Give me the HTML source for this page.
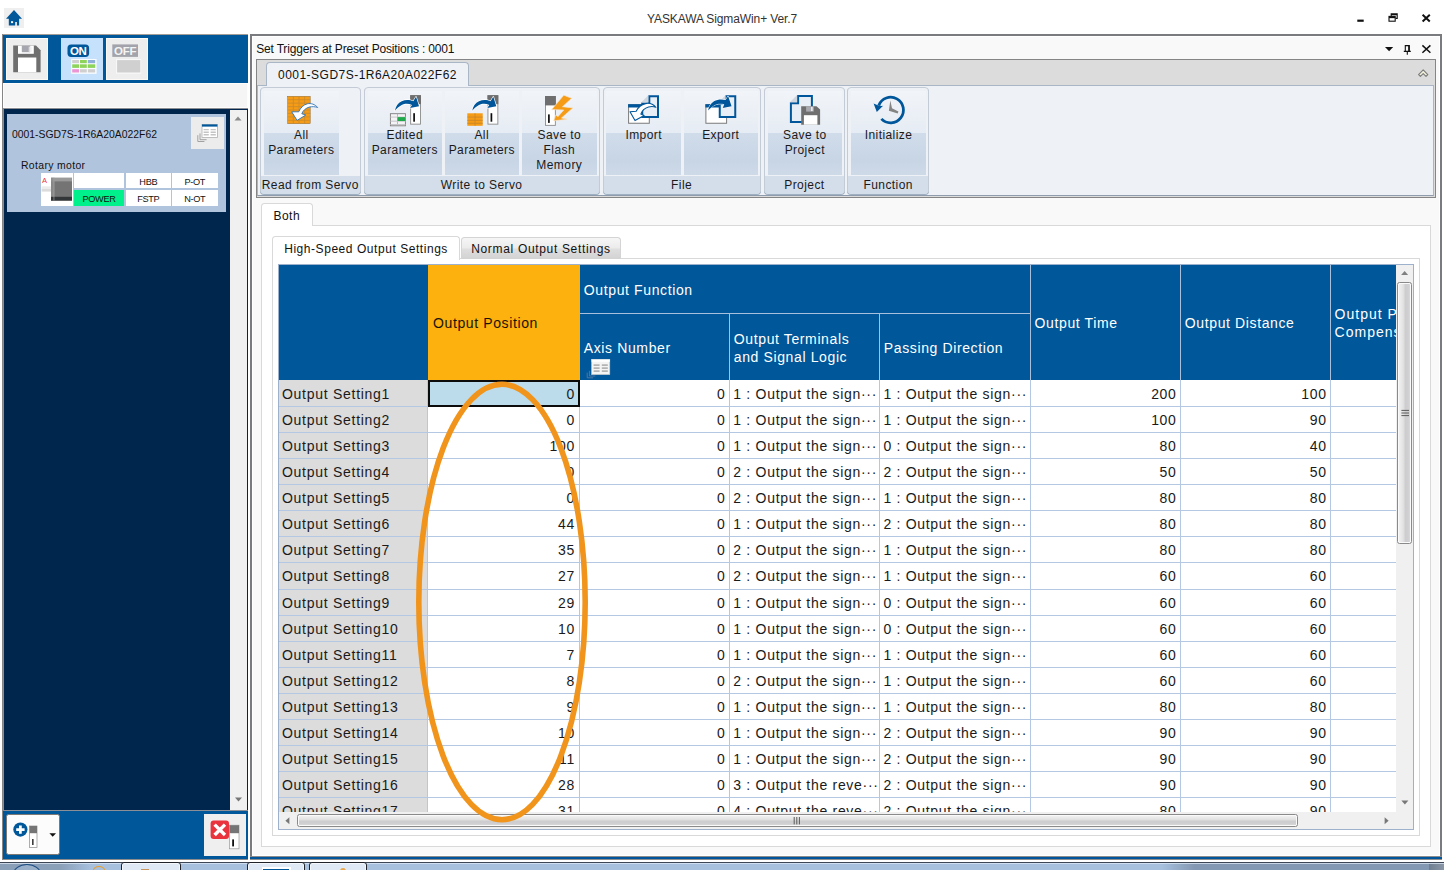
<!DOCTYPE html>
<html lang="en"><head><meta charset="utf-8"><title>YASKAWA SigmaWin+ Ver.7</title>
<style>
*{box-sizing:border-box;margin:0;padding:0}
html,body{width:1444px;height:870px;overflow:hidden;background:#fff}
body{position:relative;font-family:"Liberation Sans",sans-serif;color:#111;font-size:12px}
.a{position:absolute}
.t{position:absolute;white-space:nowrap;line-height:1}
svg{position:absolute;overflow:visible}
/* ribbon */
.grp{position:absolute;top:87px;height:107px;border:1px solid #c3ccd6;border-radius:4px;background:#eef2f6;box-shadow:0 1px 0 #9fb0c3}
.grp .lab{position:absolute;left:0;right:0;top:88px;height:18px;background:#d3deea;border-radius:0 0 3px 3px}
.btn{position:absolute;top:90.5px;height:84px;background:linear-gradient(#f1f4f8 0,#e6ecf4 42.5px,#d0dcea 42.5px,#c8d5e5 70px,#cfdae8 84px)}
.rt{position:absolute;white-space:nowrap;text-align:center;font-size:12px;letter-spacing:.42px;line-height:15px;color:#1a1a1a}
.gl{position:absolute;white-space:nowrap;text-align:center;font-size:12px;letter-spacing:.42px;line-height:15px;color:#1a1a1a;top:177.5px}
/* table */
.hc{position:absolute;background:#005799;color:#fff;font-size:14px;letter-spacing:.55px;line-height:18px}
.row{position:absolute;left:279px;width:1117px;height:27px}
.c{position:absolute;top:0;height:100%;border-right:1px solid #b4c7e3;border-bottom:1px solid #b4c7e3;font-size:14px;letter-spacing:.7px;line-height:26px;white-space:nowrap;overflow:hidden;color:#1a1a1a}
.row.f .c{padding-top:1.4px}
.c.n{text-align:right;padding-right:3.4px}
.c.l{padding-left:3.5px}
.c.h{background:#dcdcdc;padding-left:3px;letter-spacing:.72px}
</style></head><body>
<div class="a" style="left:4px;top:8px;width:20px;height:20px;background:#efefef"></div>
<svg style="left:4px;top:8px" width="20" height="20" viewBox="4 8 20 20"><path d="M14 10 L22 18.8 H19.1 V25.6 H16.9 V21.9 H15.2 V25.6 H8.8 V18.8 H6 Z" fill="#005799"/><rect x="11" y="21.2" width="2.1" height="1.9" fill="#fff"/></svg>
<div class="t" style="left:647px;top:12.5px;font-size:12px;letter-spacing:-.11px;color:#333">YASKAWA SigmaWin+ Ver.7</div>
<svg style="left:1350px;top:8px" width="90" height="20" viewBox="1350 8 90 20"><rect x="1357.3" y="19.6" width="6.4" height="2.2" fill="#111"/><path d="M1391.2 16v-2.2h6v4.600h-1.600M1391.2 14.6h6" fill="none" stroke="#111" stroke-width="1.1"/><rect x="1389" y="16.4" width="6.200" height="4.800" fill="#fff" stroke="#111" stroke-width="1.1"/><path d="M1389 17.500h6.200" stroke="#111" stroke-width="1.300"/><path d="M1422.6 14.8l7.2 6.6M1429.8 14.8l-7.2 6.6" stroke="#111" stroke-width="2" fill="none"/></svg>
<div class="a" style="left:1.9px;top:34px;width:1.2px;height:826px;background:#868686"></div>
<div class="a" style="left:3px;top:34px;width:245px;height:1px;background:#a39d97"></div>
<div class="a" style="left:3.1px;top:34.8px;width:244.9px;height:48.3px;background:#005799"></div>
<div class="a" style="left:3.1px;top:83.1px;width:244.9px;height:24.9px;background:#fffdfb"></div>
<div class="a" style="left:4.1px;top:84.1px;width:242.9px;height:22.7px;background:#f5f5f5"></div>
<div class="a" style="left:3.1px;top:108px;width:244.9px;height:703px;background:#8c8f96"></div>
<div class="a" style="left:4px;top:108.8px;width:244px;height:701px;background:#00264d"></div>
<div class="a" style="left:230px;top:109.5px;width:17px;height:700px;background:#f0f0f0"></div>
<div class="a" style="left:3.1px;top:810.9px;width:244.9px;height:48.500px;background:#005799"></div>
<div class="a" style="left:3.1px;top:859.4px;width:244.9px;height:.7px;background:#8c8c8c"></div>
<svg style="left:230px;top:109px" width="17" height="700" viewBox="230 109 17 700"><path d="M234.5 120.5l3.5-4 3.5 4z" fill="#8a8a8a"/><path d="M235 797.5h7l-3.5 4z" fill="#777"/></svg>
<div class="a" style="left:6px;top:38px;width:42px;height:42px;background:#eeeeee;border:1px solid #fcf9f5"></div>
<div class="a" style="left:61px;top:38px;width:42px;height:42px;background:#c5e1fb"></div>
<div class="a" style="left:106px;top:38px;width:42px;height:42px;background:#eeeeee;border:1px solid #fcf9f5"></div>
<svg style="left:6px;top:38px" width="42" height="42" viewBox="6 38 42 42"><path d="M13.2 45.6H36l4.6 4.6v22.1H13.2z" fill="#6f6f6f"/><rect x="18" y="57.5" width="18.3" height="14.8" fill="#fff"/><rect x="18" y="45.6" width="15.8" height="8.2" fill="#fff"/><rect x="21.8" y="45.6" width="8.4" height="6.6" fill="#a6a6ae"/><rect x="30.2" y="46.6" width="2" height="5.4" fill="#f4f4f4"/><rect x="28.7" y="46.6" width="1.5" height="5.6" fill="#dcdce0"/></svg>
<svg style="left:61px;top:38px" width="42" height="42" viewBox="61 38 42 42"><rect x="67.5" y="44.4" width="21.6" height="12.5" rx="3.6" fill="#005799"/><text x="78.3" y="54.6" text-anchor="middle" font-family="Liberation Sans, sans-serif" font-weight="700" font-size="11.5" fill="#fff" letter-spacing="-.3">ON</text><rect x="71.2" y="59" width="25.4" height="14.800" fill="#fafdff"/><rect x="72.2" y="60" width="6.8" height="3.2" fill="#cfcfcf"/><rect x="80" y="60" width="6.8" height="3.2" fill="#8ed45a"/><rect x="87.8" y="60" width="7.4" height="3.2" fill="#8fb0d8"/><rect x="72.2" y="64.3" width="6.8" height="3.6" fill="#8ed45a"/><rect x="80" y="64.3" width="6.8" height="3.6" fill="#8ed45a"/><rect x="87.8" y="64.3" width="7.4" height="3.6" fill="#8ed45a"/><rect x="72.2" y="69.200" width="6.8" height="3.300" fill="#ec94d4"/><rect x="80" y="69.200" width="6.8" height="3.300" fill="#cfcfcf"/><rect x="87.8" y="69.200" width="7.4" height="3.300" fill="#cfcfcf"/></svg>
<svg style="left:106px;top:38px" width="42" height="42" viewBox="106 38 42 42"><rect x="112.3" y="44.4" width="25.7" height="12.5" fill="#a3a3ab"/><text x="125.1" y="54.8" text-anchor="middle" font-family="Liberation Sans, sans-serif" font-weight="700" font-size="11.5" fill="#f4f4f4" letter-spacing="-.2">OFF</text><rect x="116" y="59" width="25.2" height="14.8" fill="#f8f8f8"/><rect x="117.100" y="60.100" width="23.200" height="12.400" fill="#d0d0d0"/></svg>
<div class="a" style="left:7px;top:114px;width:219px;height:98px;background:#b0c4de"></div>
<div class="t" style="left:12px;top:130.3px;font-size:10.4px;letter-spacing:.0px;color:#111">0001-SGD7S-1R6A20A022F62</div>
<div class="t" style="left:21px;top:161px;font-size:10.4px;letter-spacing:.36px;color:#111">Rotary motor</div>
<div class="a" style="left:191px;top:117px;width:33px;height:32px;background:#ececec"></div>
<svg style="left:191px;top:117px" width="33" height="32" viewBox="191 117 33 32"><path d="M197.8 135.2v6.3h6.6M200 133.4v6.3h6.6" fill="none" stroke="#9a9a9a" stroke-width="0.9"/><rect x="202" y="124.5" width="15.4" height="13" fill="#fff" stroke="#b0b0b0" stroke-width=".8"/><rect x="202" y="124.4" width="15.4" height="2.2" fill="#005799"/><path d="M203.6 129.6h5.2M203.6 132.2h5.2M203.6 134.8h5.2M210.6 129.6h5.2M210.6 132.2h5.2M210.6 134.8h5.2" stroke="#c4c4c4" stroke-width="1.4"/></svg>
<div class="a" style="left:41px;top:173px;width:32px;height:33px;background:#fff"></div>
<div class="a" style="left:74px;top:173px;width:50px;height:14.6px;background:#fff"></div>
<div class="a" style="left:74px;top:189.6px;width:50px;height:16.2px;background:#00f08c"></div>
<div class="a" style="left:126px;top:173px;width:44.6px;height:14.6px;background:#fff"></div>
<div class="a" style="left:126px;top:189.6px;width:44.6px;height:16.2px;background:#fff"></div>
<div class="a" style="left:172px;top:173px;width:45.6px;height:14.6px;background:#fff"></div>
<div class="a" style="left:172px;top:189.6px;width:45.6px;height:16.2px;background:#fff"></div>
<div class="t" style="left:74px;width:50px;top:195px;text-align:center;font-size:9.2px;letter-spacing:-.3px;color:#111">POWER</div>
<div class="t" style="left:126px;width:44.6px;top:177.6px;text-align:center;font-size:9.2px;letter-spacing:-.3px;color:#111">HBB</div>
<div class="t" style="left:126px;width:44.6px;top:195px;text-align:center;font-size:9.2px;letter-spacing:-.3px;color:#111">FSTP</div>
<div class="t" style="left:172px;width:45.6px;top:177.6px;text-align:center;font-size:9.2px;letter-spacing:-.3px;color:#111">P-OT</div>
<div class="t" style="left:172px;width:45.6px;top:195px;text-align:center;font-size:9.2px;letter-spacing:-.3px;color:#111">N-OT</div>
<div class="t" style="left:42px;top:176.800px;font-size:7.5px;color:#f0323c">A</div>
<svg style="left:41px;top:173px" width="32" height="33" viewBox="41 173 32 33"><rect x="41.6" y="186.400" width="9.6" height="2.6" fill="#ececec"/><rect x="41.6" y="189" width="9.6" height="2.6" fill="#dcdcdc"/><rect x="51" y="177.8" width="21" height="22.8" fill="#747474"/><rect x="51" y="177.8" width="21" height="3.6" fill="#9a9a9a"/><rect x="51" y="177.8" width="3.4" height="22.8" fill="#8c8c8c" opacity=".8"/><rect x="51" y="196.8" width="21" height="3.800" fill="#333639"/><rect x="53.600" y="177.800" width=".7" height="22.800" fill="#b0b0b0" opacity=".8"/></svg>
<div class="a" style="left:6.3px;top:814.3px;width:54.2px;height:41px;background:#fcfcfc;border:.8px solid #7c7874;border-radius:2.5px"></div>
<div class="a" style="left:204px;top:814px;width:42px;height:42px;background:#efefef"></div>
<svg style="left:7px;top:815px" width="54" height="40" viewBox="7 815 54 40"><circle cx="20.4" cy="829.6" r="7.1" fill="#005799"/><path d="M20.4 825.4v8.4M16.2 829.6h8.4" stroke="#fff" stroke-width="2.7"/><rect x="29.6" y="826" width="7.4" height="21.4" fill="#fff" stroke="#8a8a8a" stroke-width=".7"/><rect x="29.6" y="826" width="7.4" height="7.2" fill="#757575"/><rect x="32.2" y="839" width="1.3" height="6" fill="#111"/><path d="M49.4 833.2h6.6l-3.3 3.6z" fill="#111"/></svg>
<svg style="left:204px;top:814px" width="42" height="42" viewBox="204 814 42 42"><rect x="229.6" y="825.2" width="9.4" height="23.6" fill="#fff" stroke="#9a9a9a" stroke-width=".7"/><rect x="229.6" y="825.2" width="9.4" height="8" fill="#757575"/><rect x="232.2" y="839.4" width="1.8" height="7" fill="#111"/><rect x="210.6" y="820.6" width="18.4" height="18.4" rx="3" fill="#e9333d"/><path d="M214.6 824.6l10.4 10.4M225 824.6l-10.4 10.4" stroke="#fff" stroke-width="3.4"/></svg><div class="a" style="left:250px;top:34px;width:1192px;height:826px;background:#7a7b7e"></div>
<div class="a" style="left:252px;top:35.950px;width:1188px;height:821px;background:#fff"></div>
<div class="a" style="left:253px;top:37.100px;width:1186px;height:817.900px;background:#f9f9f9"></div>
<div class="a" style="left:252px;top:855px;width:1188px;height:1.1px;background:#fff"></div>
<div class="a" style="left:250px;top:856.1px;width:1192px;height:3.8px;background:#8c8c8c"></div>
<div class="a" style="left:250px;top:856.7px;width:1192px;height:2.6px;background:#00559a"></div>
<div class="a" style="left:250px;top:859.9px;width:1192px;height:.3px;background:#fff"></div>
<div class="t" style="left:256.2px;top:42.6px;font-size:12px;letter-spacing:-.17px;color:#111">Set Triggers at Preset Positions : 0001</div>
<svg style="left:1380px;top:42px" width="56" height="16" viewBox="1380 42 56 16"><path d="M1385 47h8.2l-4.1 4.2z" fill="#111"/><path d="M1405.300 51.200v-5.600h4v5.600M1403.800 51.400h7M1407.300 51.400v3.400" stroke="#111" stroke-width="1.100" fill="none"/><rect x="1408.200" y="45.600" width="1.300" height="5.600" fill="#111"/><path d="M1422.4 45.4l8 7.4M1430.4 45.4l-8 7.4" stroke="#111" stroke-width="1.5" fill="none"/></svg>
<div class="a" style="left:256px;top:59px;width:1180px;height:138.5px;background:#dcdcdc;border:1.2px solid #858585"></div>
<div class="a" style="left:257.4px;top:85px;width:1176.4px;height:111px;background:#eef2f6;border:1px solid #a9b6c6;border-bottom-color:#8f9cae"></div>
<div class="a" style="left:266px;top:61.6px;width:203px;height:24.4px;background:#eef2f6;border:1px solid #a9b6c6;border-bottom:none;border-radius:4px 4px 0 0"></div>
<div class="t" style="left:278px;top:69px;font-size:12px;letter-spacing:.48px;color:#111">0001-SGD7S-1R6A20A022F62</div>
<svg style="left:1416px;top:67px" width="14" height="12" viewBox="1416 67 14 12"><path d="M1418.600 74.600L1423.200 69.800L1427.800 74.600L1426 76.400L1423.200 73.600L1420.400 76.400Z" fill="#f4f2dc" stroke="#7c7c7c" stroke-width="1.150" stroke-linejoin="round"/></svg>
<div class="grp" style="left:260px;width:100.6px"><div class="lab"></div></div>
<div class="gl" style="left:260px;width:100.6px">Read from Servo</div>
<div class="grp" style="left:363.7px;width:235.9px"><div class="lab"></div></div>
<div class="gl" style="left:363.7px;width:235.9px">Write to Servo</div>
<div class="grp" style="left:602.6px;width:158px"><div class="lab"></div></div>
<div class="gl" style="left:602.6px;width:158px">File</div>
<div class="grp" style="left:763.7px;width:81.5px"><div class="lab"></div></div>
<div class="gl" style="left:763.7px;width:81.5px">Project</div>
<div class="grp" style="left:847.4px;width:81.5px"><div class="lab"></div></div>
<div class="gl" style="left:847.4px;width:81.5px">Function</div>
<div class="btn" style="left:263.8px;width:75px"></div>
<div class="rt" style="left:253.8px;width:95px;top:128px">All<br>Parameters</div>
<div class="btn" style="left:367.5px;width:74.5px"></div>
<div class="rt" style="left:357.5px;width:94.5px;top:128px">Edited<br>Parameters</div>
<div class="btn" style="left:444.5px;width:74.5px"></div>
<div class="rt" style="left:434.5px;width:94.5px;top:128px">All<br>Parameters</div>
<div class="btn" style="left:521.6px;width:75.4px"></div>
<div class="rt" style="left:511.6px;width:95.4px;top:128px">Save to<br>Flash<br>Memory</div>
<div class="btn" style="left:606.3px;width:74.7px"></div>
<div class="rt" style="left:596.3px;width:94.7px;top:128px">Import</div>
<div class="btn" style="left:683.5px;width:74.5px"></div>
<div class="rt" style="left:673.5px;width:94.5px;top:128px">Export</div>
<div class="btn" style="left:767.6px;width:74.4px"></div>
<div class="rt" style="left:757.6px;width:94.4px;top:128px">Save to<br>Project</div>
<div class="btn" style="left:851.4px;width:74.3px"></div>
<div class="rt" style="left:841.4px;width:94.3px;top:128px">Initialize</div><svg style="left:256px;top:86px" width="700" height="92" viewBox="256 86 700 92">
<rect x="287.700" y="96.300" width="22.500" height="27.400" fill="#f59b15" stroke="#8a6a3a" stroke-width=".5"/>
<path d="M293.3 96.3v27.4M299 96.3v27.4M304.600 96.3v27.400M287.700 99.700h22.500M287.700 103.100h22.500M287.700 106.600h22.500M287.700 110h22.500M287.700 113.400h22.500M287.700 116.900h22.500M287.700 120.300h22.500" stroke="#c98a2c" stroke-width=".8" fill="none"/>
<path d="M317.700 107.500C315 104.300 311 103 307.500 103.750C303.500 104.600 300.300 108 298.750 111.800L291.700 111.800L297.100 120.400L305.800 115L301.800 113.750C303 110.400 306 108 309.200 107.100C312 106.400 315.500 106.600 317.700 107.500Z" fill="#fff" stroke="#2f74b4" stroke-width=".9" stroke-linejoin="round"/>
<rect x="410.65" y="95.65" width="9.9" height="28.5" fill="#fff" stroke="#8a8a8a" stroke-width=".9"/><rect x="410.2" y="95.2" width="10.8" height="9" fill="#6e6e6e"/><rect x="413.25" y="113.2" width="1.7" height="8.5" fill="#0c0c0c"/>
<rect x="390.4" y="113.7" width="15" height="12.100" fill="#f4f4f6" stroke="#7c7c7c" stroke-width=".9"/>
<path d="M397.5 113.3v12.500" stroke="#9aa4b4" stroke-width=".7" fill="none"/>
<path d="M390.4 117.1h15M390.4 121.2h15M390.4 124.5h15" stroke="#c6c6c8" stroke-width="1" fill="none"/>
<rect x="397.5" y="117.1" width="7.500" height="3.900" fill="#1fa84c"/>
<path transform="translate(0 0)" d="M395 110.700C395.500 106.500 398 103 401.700 101.250C405.500 99.400 410 99.800 413.300 101.250L416 96.800L419 106.250L410 107.900L412 105C408.500 103.300 404.500 103.600 401.700 105C399 106.300 396.800 108.500 395 110.700Z" fill="#00569a" stroke="#fff" stroke-width="1.300" paint-order="stroke" stroke-linejoin="round"/>
<rect x="487.95" y="95.65" width="9.9" height="28.5" fill="#fff" stroke="#8a8a8a" stroke-width=".9"/><rect x="487.5" y="95.2" width="10.8" height="9" fill="#6e6e6e"/><rect x="490.55" y="113.2" width="1.7" height="8.5" fill="#0c0c0c"/>
<rect x="467.3" y="113.3" width="15.400" height="12.500" fill="#f59b15"/>
<path d="M475 113.3v12.500M467.3 117.1h15.400M467.3 120.4h15.400M467.3 123.3h15.400" stroke="#c8862a" stroke-width=".8" fill="none"/>
<path transform="translate(77.3 0)" d="M395 110.700C395.500 106.500 398 103 401.700 101.250C405.500 99.400 410 99.800 413.300 101.250L416 96.800L419 106.250L410 107.900L412 105C408.500 103.300 404.500 103.600 401.700 105C399 106.300 396.800 108.500 395 110.700Z" fill="#00569a" stroke="#fff" stroke-width="1.300" paint-order="stroke" stroke-linejoin="round"/>
<rect x="545.45" y="96.45" width="9.9" height="28.9" fill="#fff" stroke="#8a8a8a" stroke-width=".9"/><rect x="545" y="96" width="10.8" height="9.4" fill="#6e6e6e"/><rect x="548.05" y="114.4" width="1.7" height="8.5" fill="#0c0c0c"/>
<path d="M563.750 95.200L571.700 98.300L562.500 106.700L572.900 107.900L561.500 118L567.100 119.300L553.750 120.800L555.800 115L557.900 116.700L563.750 110L551.700 109.600Z" fill="#f59b15" stroke="#f3e3cc" stroke-width=".7" stroke-linejoin="round"/>
<rect x="628.6" y="104.7" width="20.7" height="18.55" fill="#fff" stroke="#7a7a7a" stroke-width="1"/>
<rect x="628.1" y="104.2" width="21.7" height="3.300" fill="#00569a"/>
<path d="M649.3 96.2H658V116.9H642.25V103.5H649.3Z" fill="#e8eef5" stroke="#00569a" stroke-width="2" stroke-linejoin="miter"/>
<path d="M641.25 102.5L648.3 95.2V102.5Z" fill="#d0d6de"/>
<path d="M655.900 107.300C653 104 649 102.800 645.500 103.600C641.500 104.500 638 107.500 636.200 111.200L630 111.800L635 120.600L644.100 115.400L640.800 114.100C642 110.500 645 108 648.500 107C651 106.300 653.800 106.500 655.900 107.300Z" fill="#fff" stroke="#00569a" stroke-width="1.100" stroke-linejoin="round"/>
<rect x="705.9" y="104.7" width="20.7" height="18.55" fill="#fff" stroke="#7a7a7a" stroke-width="1"/>
<rect x="705.4" y="104.2" width="21.7" height="3.300" fill="#00569a"/>
<path d="M726.4 96.2H735.25V116.9H719.75V103.5H726.4Z" fill="#e8eef5" stroke="#00569a" stroke-width="2" stroke-linejoin="miter"/>
<path d="M718.75 102.5L725.4 95.2V102.5Z" fill="#d0d6de"/>
<path d="M708.100 110.600C708.600 106.500 711 103 714 101.200C717.500 99.200 722 99 725.600 100L728.100 96L731.600 106.200L722.700 108.100L724.300 104.300C720.500 103.200 716.500 104 714 105.400C711.500 106.800 709.600 108.800 708.100 110.600Z" fill="#00569a" stroke="#fff" stroke-width="1" paint-order="stroke" stroke-linejoin="round"/>
<path d="M798.1 96H811.9V121.9H790.9V103.2H798.1Z" fill="#e8eef5" stroke="#00569a" stroke-width="2" stroke-linejoin="miter"/>
<path d="M789.9 102.2L797.1 95V102.2Z" fill="#d0d6de"/>
<path d="M801.200 106.200H816.500L820.100 109.400V124.700H801.200Z" fill="#6f6f6f"/>
<rect x="803.900" y="115.200" width="13.500" height="9.500" fill="#fff"/>
<rect x="806.100" y="106.200" width="7.700" height="5.400" fill="#a9a9b0"/><rect x="811.100" y="107" width="1.500" height="4" fill="#f0f0f0"/>
<path d="M881.400 118.900A12.800 12.800 0 1 0 878.700 105.400" fill="none" stroke="#00569a" stroke-width="2.800"/>
<path d="M873.600 103.500Q878.600 106.300 883.100 105.800L876.800 111.900Z" fill="#00569a"/>
<path d="M890.300 100.400L892 108.300L898.400 111.600L897.700 113.400L888.900 110.800Z" fill="#848484"/>
</svg><div class="a" style="left:261px;top:225px;width:1170px;height:621.6px;background:#fff;border:1px solid #d9d9d9"></div>
<div class="a" style="left:261px;top:202.600px;width:51.900px;height:23.500px;background:#fff;border:1px solid #d9d9d9;border-bottom:none;border-radius:3.5px 3.5px 0 0"></div>
<div class="t" style="left:273.4px;top:209.8px;font-size:12px;letter-spacing:.5px;color:#111">Both</div>
<div class="a" style="left:272.3px;top:258.4px;width:1148px;height:577.4px;background:#fff;border:1px solid #d9d9d9"></div>
<div class="a" style="left:461.2px;top:237.300px;width:160px;height:21.300px;background:linear-gradient(#f6f6f6,#ececec 45%,#dedede 55%,#d2d2d2);border:1px solid #d4d4d4;border-bottom:none;border-radius:3.5px 3.5px 0 0"></div>
<div class="a" style="left:272.3px;top:235.900px;width:187.6px;height:23.700px;background:#fff;border:1px solid #d9d9d9;border-bottom:none;border-radius:3.5px 3.5px 0 0"></div>
<div class="t" style="left:284.2px;top:243.2px;font-size:12px;letter-spacing:.55px;color:#111">High-Speed Output Settings</div>
<div class="t" style="left:471.2px;top:243.2px;font-size:12px;letter-spacing:.67px;color:#111">Normal Output Settings</div>
<div class="a" style="left:278.2px;top:264px;width:1136px;height:565.8px;background:#fff;border:1px solid #9db0cc"></div>
<div class="a" style="left:279px;top:264.6px;width:1117.4px;height:115px;background:#a9c0dc"></div>
<div class="a" style="left:279px;top:264.6px;width:149.2px;height:115px;background:#005799"></div>
<div class="a" style="left:428.2px;top:264.6px;width:151.6px;height:115px;background:#fcb10f"></div>
<div class="a" style="left:580.15px;top:264.6px;width:450.1px;height:48.45px;background:#005799"></div>
<div class="a" style="left:580.15px;top:313.75px;width:148.8px;height:65.85px;background:#005799"></div>
<div class="a" style="left:729.65px;top:313.75px;width:149.4px;height:65.85px;background:#005799"></div>
<div class="a" style="left:879.75px;top:313.75px;width:150.5px;height:65.85px;background:#005799"></div>
<div class="a" style="left:1030.95px;top:264.6px;width:149.2px;height:115px;background:#005799"></div>
<div class="a" style="left:1180.85px;top:264.6px;width:149.4px;height:115px;background:#005799"></div>
<div class="a" style="left:1330.95px;top:264.6px;width:65.45px;height:115px;background:#005799"></div>
<div class="t" style="left:433px;top:313.5px;font-size:14px;letter-spacing:.62px;line-height:18.2px;color:#1a1400">Output Position</div>
<div class="t" style="left:583.8px;top:280.5px;font-size:14px;letter-spacing:.62px;line-height:18.2px;color:#fff">Output Function</div>
<div class="t" style="left:583.8px;top:338.5px;font-size:14px;letter-spacing:.62px;line-height:18.2px;color:#fff">Axis Number</div>
<div class="t" style="left:733.8px;top:329.5px;font-size:14px;letter-spacing:.62px;line-height:18.2px;color:#fff">Output Terminals<br>and Signal Logic</div>
<div class="t" style="left:883.8px;top:338.5px;font-size:14px;letter-spacing:.62px;line-height:18.2px;color:#fff">Passing Direction</div>
<div class="t" style="left:1034.6px;top:313.5px;font-size:14px;letter-spacing:.62px;line-height:18.2px;color:#fff">Output Time</div>
<div class="t" style="left:1184.8px;top:313.5px;font-size:14px;letter-spacing:.62px;line-height:18.2px;color:#fff">Output Distance</div>
<div class="a" style="left:1330.6px;top:300px;width:65.8px;height:44px;overflow:hidden"><div class="t" style="left:4px;top:4.5px;font-size:14px;letter-spacing:1px;line-height:18.2px;color:#fff">Output Position<br>Compensation</div></div>
<svg style="left:586px;top:357px" width="26" height="22" viewBox="586 357 26 22"><path d="M587.2 372.6v5.2h6M589.4 370.8v5.2h6" fill="none" stroke="#5e7fa6" stroke-width=".8"/><rect x="591.6" y="359.6" width="18.2" height="15" fill="#f4f4f4" stroke="#c8c8c8" stroke-width=".6"/><rect x="591.6" y="359.4" width="18.2" height="2.4" fill="#fff"/><path d="M593.6 365.2h6M593.6 368.2h6M593.6 371.2h6M601.8 365.2h6M601.8 368.2h6M601.8 371.2h6" stroke="#b4b4b4" stroke-width="1.7"/></svg>
<div class="a" style="left:279px;top:379.6px;width:1117.4px;height:432.6px;overflow:hidden">
<div class="row f" style="left:0;top:0px;height:27.4px">
<div class="c h" style="left:0px;width:149.4px;">Output Setting1</div>
<div class="c n" style="left:149.4px;width:151.9px;padding-right:4.300px;background:#bcdcec;">0</div>
<div class="c n" style="left:301.3px;width:149.5px;">0</div>
<div class="c l" style="left:450.8px;width:150.1px;">1 : Output the sign···</div>
<div class="c l" style="left:600.9px;width:151.2px;">1 : Output the sign···</div>
<div class="c n" style="left:752.1px;width:149.9px;">200</div>
<div class="c n" style="left:902px;width:150.1px;">100</div>
<div class="c n" style="left:1052.1px;width:65.3px;border-right:none;"></div>
</div>
<div class="row" style="left:0;top:27.4px;height:26px">
<div class="c h" style="left:0px;width:149.4px;">Output Setting2</div>
<div class="c n" style="left:149.4px;width:151.9px;padding-right:4.300px;">0</div>
<div class="c n" style="left:301.3px;width:149.5px;">0</div>
<div class="c l" style="left:450.8px;width:150.1px;">1 : Output the sign···</div>
<div class="c l" style="left:600.9px;width:151.2px;">1 : Output the sign···</div>
<div class="c n" style="left:752.1px;width:149.9px;">100</div>
<div class="c n" style="left:902px;width:150.1px;">90</div>
<div class="c n" style="left:1052.1px;width:65.3px;border-right:none;"></div>
</div>
<div class="row" style="left:0;top:53.4px;height:26px">
<div class="c h" style="left:0px;width:149.4px;">Output Setting3</div>
<div class="c n" style="left:149.4px;width:151.9px;padding-right:4.300px;">100</div>
<div class="c n" style="left:301.3px;width:149.5px;">0</div>
<div class="c l" style="left:450.8px;width:150.1px;">1 : Output the sign···</div>
<div class="c l" style="left:600.9px;width:151.2px;">0 : Output the sign···</div>
<div class="c n" style="left:752.1px;width:149.9px;">80</div>
<div class="c n" style="left:902px;width:150.1px;">40</div>
<div class="c n" style="left:1052.1px;width:65.3px;border-right:none;"></div>
</div>
<div class="row" style="left:0;top:79.4px;height:26px">
<div class="c h" style="left:0px;width:149.4px;">Output Setting4</div>
<div class="c n" style="left:149.4px;width:151.9px;padding-right:4.300px;">0</div>
<div class="c n" style="left:301.3px;width:149.5px;">0</div>
<div class="c l" style="left:450.8px;width:150.1px;">2 : Output the sign···</div>
<div class="c l" style="left:600.9px;width:151.2px;">2 : Output the sign···</div>
<div class="c n" style="left:752.1px;width:149.9px;">50</div>
<div class="c n" style="left:902px;width:150.1px;">50</div>
<div class="c n" style="left:1052.1px;width:65.3px;border-right:none;"></div>
</div>
<div class="row" style="left:0;top:105.4px;height:26px">
<div class="c h" style="left:0px;width:149.4px;">Output Setting5</div>
<div class="c n" style="left:149.4px;width:151.9px;padding-right:4.300px;">0</div>
<div class="c n" style="left:301.3px;width:149.5px;">0</div>
<div class="c l" style="left:450.8px;width:150.1px;">2 : Output the sign···</div>
<div class="c l" style="left:600.9px;width:151.2px;">1 : Output the sign···</div>
<div class="c n" style="left:752.1px;width:149.9px;">80</div>
<div class="c n" style="left:902px;width:150.1px;">80</div>
<div class="c n" style="left:1052.1px;width:65.3px;border-right:none;"></div>
</div>
<div class="row" style="left:0;top:131.4px;height:26px">
<div class="c h" style="left:0px;width:149.4px;">Output Setting6</div>
<div class="c n" style="left:149.4px;width:151.9px;padding-right:4.300px;">44</div>
<div class="c n" style="left:301.3px;width:149.5px;">0</div>
<div class="c l" style="left:450.8px;width:150.1px;">1 : Output the sign···</div>
<div class="c l" style="left:600.9px;width:151.2px;">2 : Output the sign···</div>
<div class="c n" style="left:752.1px;width:149.9px;">80</div>
<div class="c n" style="left:902px;width:150.1px;">80</div>
<div class="c n" style="left:1052.1px;width:65.3px;border-right:none;"></div>
</div>
<div class="row" style="left:0;top:157.4px;height:26px">
<div class="c h" style="left:0px;width:149.4px;">Output Setting7</div>
<div class="c n" style="left:149.4px;width:151.9px;padding-right:4.300px;">35</div>
<div class="c n" style="left:301.3px;width:149.5px;">0</div>
<div class="c l" style="left:450.8px;width:150.1px;">2 : Output the sign···</div>
<div class="c l" style="left:600.9px;width:151.2px;">1 : Output the sign···</div>
<div class="c n" style="left:752.1px;width:149.9px;">80</div>
<div class="c n" style="left:902px;width:150.1px;">80</div>
<div class="c n" style="left:1052.1px;width:65.3px;border-right:none;"></div>
</div>
<div class="row" style="left:0;top:183.4px;height:27px">
<div class="c h" style="left:0px;width:149.4px;">Output Setting8</div>
<div class="c n" style="left:149.4px;width:151.9px;padding-right:4.300px;">27</div>
<div class="c n" style="left:301.3px;width:149.5px;">0</div>
<div class="c l" style="left:450.8px;width:150.1px;">2 : Output the sign···</div>
<div class="c l" style="left:600.9px;width:151.2px;">1 : Output the sign···</div>
<div class="c n" style="left:752.1px;width:149.9px;">60</div>
<div class="c n" style="left:902px;width:150.1px;">60</div>
<div class="c n" style="left:1052.1px;width:65.3px;border-right:none;"></div>
</div>
<div class="row" style="left:0;top:210.4px;height:26px">
<div class="c h" style="left:0px;width:149.4px;">Output Setting9</div>
<div class="c n" style="left:149.4px;width:151.9px;padding-right:4.300px;">29</div>
<div class="c n" style="left:301.3px;width:149.5px;">0</div>
<div class="c l" style="left:450.8px;width:150.1px;">1 : Output the sign···</div>
<div class="c l" style="left:600.9px;width:151.2px;">0 : Output the sign···</div>
<div class="c n" style="left:752.1px;width:149.9px;">60</div>
<div class="c n" style="left:902px;width:150.1px;">60</div>
<div class="c n" style="left:1052.1px;width:65.3px;border-right:none;"></div>
</div>
<div class="row" style="left:0;top:236.4px;height:26px">
<div class="c h" style="left:0px;width:149.4px;">Output Setting10</div>
<div class="c n" style="left:149.4px;width:151.9px;padding-right:4.300px;">10</div>
<div class="c n" style="left:301.3px;width:149.5px;">0</div>
<div class="c l" style="left:450.8px;width:150.1px;">1 : Output the sign···</div>
<div class="c l" style="left:600.9px;width:151.2px;">0 : Output the sign···</div>
<div class="c n" style="left:752.1px;width:149.9px;">60</div>
<div class="c n" style="left:902px;width:150.1px;">60</div>
<div class="c n" style="left:1052.1px;width:65.3px;border-right:none;"></div>
</div>
<div class="row" style="left:0;top:262.4px;height:26px">
<div class="c h" style="left:0px;width:149.4px;">Output Setting11</div>
<div class="c n" style="left:149.4px;width:151.9px;padding-right:4.300px;">7</div>
<div class="c n" style="left:301.3px;width:149.5px;">0</div>
<div class="c l" style="left:450.8px;width:150.1px;">1 : Output the sign···</div>
<div class="c l" style="left:600.9px;width:151.2px;">1 : Output the sign···</div>
<div class="c n" style="left:752.1px;width:149.9px;">60</div>
<div class="c n" style="left:902px;width:150.1px;">60</div>
<div class="c n" style="left:1052.1px;width:65.3px;border-right:none;"></div>
</div>
<div class="row" style="left:0;top:288.4px;height:26px">
<div class="c h" style="left:0px;width:149.4px;">Output Setting12</div>
<div class="c n" style="left:149.4px;width:151.9px;padding-right:4.300px;">8</div>
<div class="c n" style="left:301.3px;width:149.5px;">0</div>
<div class="c l" style="left:450.8px;width:150.1px;">2 : Output the sign···</div>
<div class="c l" style="left:600.9px;width:151.2px;">1 : Output the sign···</div>
<div class="c n" style="left:752.1px;width:149.9px;">60</div>
<div class="c n" style="left:902px;width:150.1px;">60</div>
<div class="c n" style="left:1052.1px;width:65.3px;border-right:none;"></div>
</div>
<div class="row" style="left:0;top:314.4px;height:26px">
<div class="c h" style="left:0px;width:149.4px;">Output Setting13</div>
<div class="c n" style="left:149.4px;width:151.9px;padding-right:4.300px;">9</div>
<div class="c n" style="left:301.3px;width:149.5px;">0</div>
<div class="c l" style="left:450.8px;width:150.1px;">1 : Output the sign···</div>
<div class="c l" style="left:600.9px;width:151.2px;">1 : Output the sign···</div>
<div class="c n" style="left:752.1px;width:149.9px;">80</div>
<div class="c n" style="left:902px;width:150.1px;">80</div>
<div class="c n" style="left:1052.1px;width:65.3px;border-right:none;"></div>
</div>
<div class="row" style="left:0;top:340.4px;height:26px">
<div class="c h" style="left:0px;width:149.4px;">Output Setting14</div>
<div class="c n" style="left:149.4px;width:151.9px;padding-right:4.300px;">10</div>
<div class="c n" style="left:301.3px;width:149.5px;">0</div>
<div class="c l" style="left:450.8px;width:150.1px;">1 : Output the sign···</div>
<div class="c l" style="left:600.9px;width:151.2px;">2 : Output the sign···</div>
<div class="c n" style="left:752.1px;width:149.9px;">90</div>
<div class="c n" style="left:902px;width:150.1px;">90</div>
<div class="c n" style="left:1052.1px;width:65.3px;border-right:none;"></div>
</div>
<div class="row" style="left:0;top:366.4px;height:26px">
<div class="c h" style="left:0px;width:149.4px;">Output Setting15</div>
<div class="c n" style="left:149.4px;width:151.9px;padding-right:4.300px;">11</div>
<div class="c n" style="left:301.3px;width:149.5px;">0</div>
<div class="c l" style="left:450.8px;width:150.1px;">1 : Output the sign···</div>
<div class="c l" style="left:600.9px;width:151.2px;">2 : Output the sign···</div>
<div class="c n" style="left:752.1px;width:149.9px;">90</div>
<div class="c n" style="left:902px;width:150.1px;">90</div>
<div class="c n" style="left:1052.1px;width:65.3px;border-right:none;"></div>
</div>
<div class="row" style="left:0;top:392.4px;height:26px">
<div class="c h" style="left:0px;width:149.4px;">Output Setting16</div>
<div class="c n" style="left:149.4px;width:151.9px;padding-right:4.300px;">28</div>
<div class="c n" style="left:301.3px;width:149.5px;">0</div>
<div class="c l" style="left:450.8px;width:150.1px;">3 : Output the reve···</div>
<div class="c l" style="left:600.9px;width:151.2px;">2 : Output the sign···</div>
<div class="c n" style="left:752.1px;width:149.9px;">90</div>
<div class="c n" style="left:902px;width:150.1px;">90</div>
<div class="c n" style="left:1052.1px;width:65.3px;border-right:none;"></div>
</div>
<div class="row" style="left:0;top:418.4px;height:26px">
<div class="c h" style="left:0px;width:149.4px;">Output Setting17</div>
<div class="c n" style="left:149.4px;width:151.9px;padding-right:4.300px;">31</div>
<div class="c n" style="left:301.3px;width:149.5px;">0</div>
<div class="c l" style="left:450.8px;width:150.1px;">4 : Output the reve···</div>
<div class="c l" style="left:600.9px;width:151.2px;">2 : Output the sign···</div>
<div class="c n" style="left:752.1px;width:149.9px;">80</div>
<div class="c n" style="left:902px;width:150.1px;">90</div>
<div class="c n" style="left:1052.1px;width:65.3px;border-right:none;"></div>
</div>
</div>
<div class="a" style="left:427.5px;top:379.5px;width:152.8px;height:27.6px;border:2px solid #0c0c0c"></div>
<div class="a" style="left:1396.4px;top:264.6px;width:16.8px;height:547.6px;background:#f0f0f0"></div>
<div class="a" style="left:1397.4px;top:282.2px;width:14.2px;height:262px;border:1px solid #8a8a8a;border-radius:2.5px;box-shadow:inset 0 0 0 1px #fafafa;background:linear-gradient(90deg,#f4f4f4,#e2e2e2 40%,#cdcdcf 58%,#d0d0d2 80%,#dedede)"></div>
<svg style="left:1396px;top:264px" width="18" height="548" viewBox="1396 264 18 548"><path d="M1401.100 275.100l3.500-4.100 3.500 4.100z" fill="#808080"/><path d="M1401.4 800.6h7l-3.5 4z" fill="#777"/><path d="M1401.4 410.4h7.6M1401.4 413h7.6M1401.4 415.6h7.6" stroke="#5a5a5a" stroke-width="1"/></svg>
<div class="a" style="left:279px;top:812.2px;width:1134.2px;height:16.6px;background:#f0f0f0"></div>
<div class="a" style="left:296.6px;top:813.6px;width:1001.6px;height:13.8px;border:1px solid #8a8a8a;border-radius:2.5px;box-shadow:inset 0 0 0 1px #fafafa;background:linear-gradient(#f4f4f4,#e2e2e2 40%,#cdcdcf 58%,#d0d0d2 80%,#dedede)"></div>
<svg style="left:279px;top:812px" width="1135" height="17" viewBox="279 812 1135 17"><path d="M289.4 817.2v7l-4-3.5z" fill="#777"/><path d="M1384.6 817.2v7l4-3.5z" fill="#777"/><path d="M794.2 817v7.4M796.8 817v7.4M799.4 817v7.4" stroke="#5a5a5a" stroke-width="1"/></svg>
<svg style="left:410px;top:375px" width="185" height="455" viewBox="410 375 185 455"><ellipse cx="502" cy="602" rx="83.2" ry="217.7" fill="none" stroke="#f1941b" stroke-width="5.6"/></svg>
<div class="a" style="left:0;top:861.6px;width:1444px;height:1.5px;background:#3c4654"></div>
<div class="a" style="left:0;top:863px;width:1444px;height:7px;background:linear-gradient(90deg,#8a9fb8 0,#8a9fb8 60px,#a6c0de 91px,#a6c0de 1162px,#8398b2 1195px,#8398b2 1429px,#6f7f92 1429px,#8a96a6 1444px)"></div>
<div class="a" style="left:0;top:863px;width:1444px;height:1.2px;background:rgba(220,232,246,.75)"></div>
<div class="a" style="left:13px;top:864px;width:28px;height:20px;border-radius:50%;border:1.4px solid #1d4d85;background:#9ab0c8"></div>
<div class="a" style="left:121px;top:862px;width:59.6px;height:12px;border:1.2px solid #20242a;border-radius:3px;background:#dfe9f5;box-shadow:inset 0 0 0 1px #f4f8fc"></div>
<div class="a" style="left:247px;top:862px;width:58.4px;height:12px;border:1.2px solid #20242a;border-radius:3px;background:#dfe9f5;box-shadow:inset 0 0 0 1px #f4f8fc"></div>
<div class="a" style="left:308.8px;top:862px;width:58.2px;height:12px;border:1.2px solid #20242a;border-radius:3px;background:#dfe9f5;box-shadow:inset 0 0 0 1px #f4f8fc"></div>
<div class="a" style="left:261.6px;top:866.6px;width:29px;height:4px;background:#fff"></div><div class="a" style="left:263.4px;top:868.6px;width:25.4px;height:2px;background:#005799"></div>
<div class="a" style="left:141px;top:868.6px;width:8px;height:2px;background:#c9955a"></div>
<div class="a" style="left:340px;top:867.6px;width:6px;height:3px;background:#e9a64a;border-radius:3px 3px 0 0"></div>
<div class="a" style="left:93px;top:866.4px;width:12px;height:8px;border:1.6px solid #eaa030;border-radius:50%"></div>
</body></html>
